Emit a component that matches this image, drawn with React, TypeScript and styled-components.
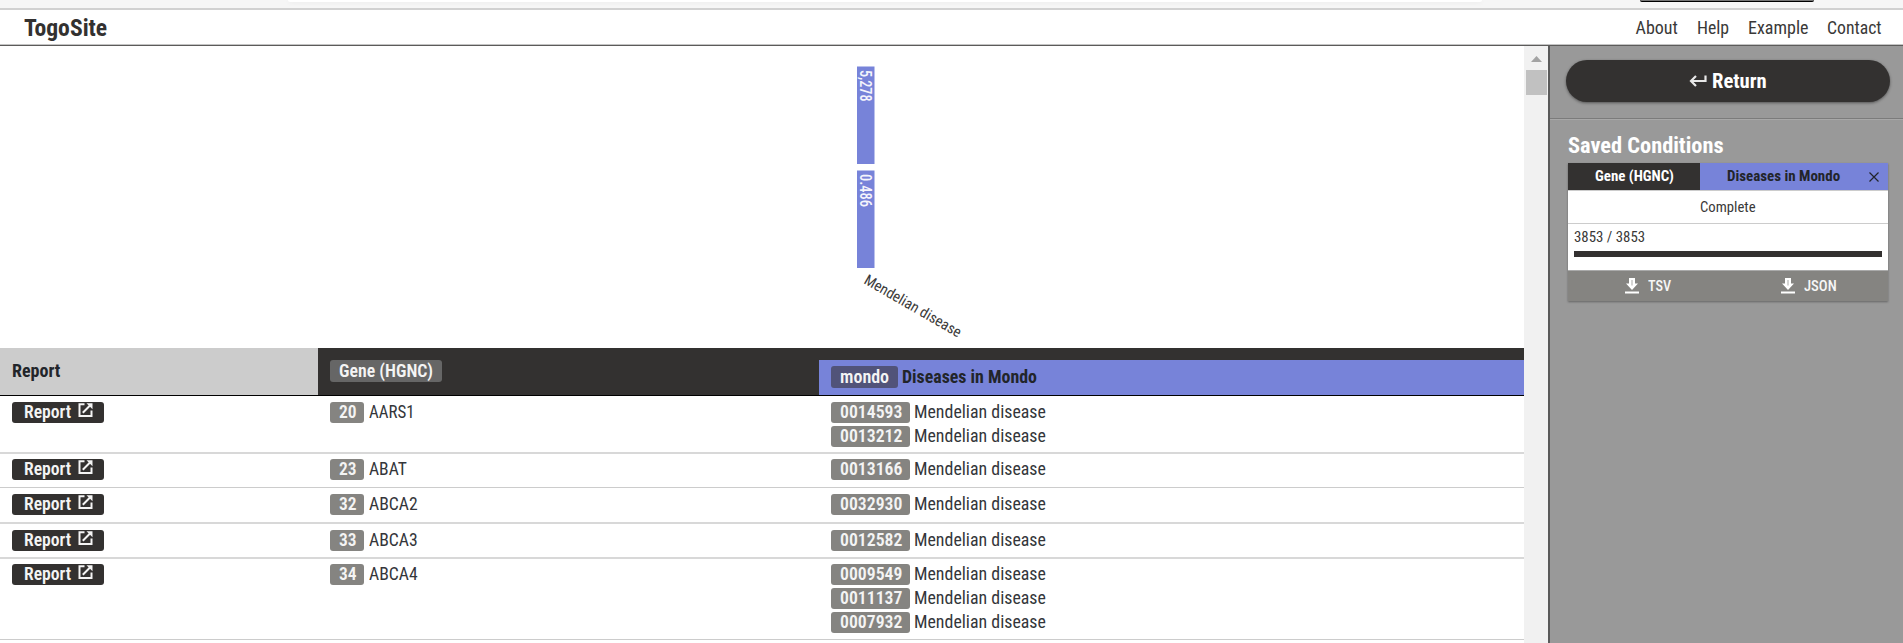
import React, { useLayoutEffect, useRef } from "react";
import styled, { createGlobalStyle } from "styled-components";

const ink = "#333130";
const violet = "#7783d9";

const Global = createGlobalStyle`
  * { box-sizing: border-box; }
  body { margin: 0; overflow: hidden; background: #fff; }
  body, button {
    font-family: "Roboto Condensed", Roboto, "Liberation Sans Narrow", sans-serif;
    font-stretch: 75%;
  }
`;

const FitBox = styled.span<{ $w: number }>`
  display: block;
  flex: none;
  width: ${(p) => p.$w}px;
  white-space: nowrap;
  text-align: left;
`;
const FitInner = styled.span`
  display: inline-block;
  transform-origin: 0 50%;
`;

/* Condenses its text horizontally so that it takes exactly `w` pixels. */
function Fit({ w, children }: { w: number; children: string }) {
  const ref = useRef<HTMLSpanElement>(null);
  useLayoutEffect(() => {
    const el = ref.current;
    if (el) el.style.transform = `scaleX(${w / el.offsetWidth})`;
  }, [w]);
  return (
    <FitBox $w={w}>
      <FitInner ref={ref}>{children}</FitInner>
    </FitBox>
  );
}

const Page = styled.div`
  display: flex;
  flex-direction: column;
  width: 1903px;
  height: 643px;
  overflow: hidden;
  color: #3a3938;
`;

const BrowserStrip = styled.div`
  flex: none;
  display: flex;
  height: 10px;
  padding-left: 288px;
  background: #f6f6f6;
  border-bottom: 2px solid #d1d1d1;
`;
const AddressField = styled.div`
  width: 1194px;
  height: 2px;
  background: #fff;
  border-radius: 0 0 6px 6px;
  box-shadow: 0 1px 4px rgba(0, 0, 0, 0.06);
`;
const ProfileChip = styled.div`
  width: 174px;
  height: 2px;
  margin-left: 158px;
  background: #777;
  border-bottom: 1px solid #000;
  border-radius: 0 0 6px 6px;
`;

const Header = styled.header`
  flex: none;
  display: flex;
  align-items: center;
  justify-content: space-between;
  height: 36px;
  padding: 1px 21px 0 24px;
  border-bottom: 1px solid #5c5b5a;
  box-shadow: inset 0 -1px 0 #c4c4c4;
`;
const Brand = styled.h1`
  margin: 0;
  color: ${ink};
  font-size: 23.5px;
  font-weight: 700;
  line-height: 30px;
`;
const Nav = styled.nav`
  display: flex;
  gap: 19px;
  font-size: 18px;
  line-height: 28px;
`;

const Body = styled.div`
  flex: 1;
  display: flex;
  min-height: 0;
`;
const Main = styled.main`
  width: 1524px;
  overflow: hidden;
`;

const Chart = styled.svg`
  display: block;
  width: 1524px;
  height: 302px;
`;

const columns = "318px 501px 705px";

const TableHead = styled.div`
  display: grid;
  grid-template-columns: ${columns};
  height: 48px;
  border-bottom: 1px solid #000;
  font-size: 18px;
  font-weight: 700;
  line-height: 22px;
  background: ${ink};
`;
const ReportHead = styled.div`
  display: flex;
  align-items: center;
  padding: 0 0 2px 12px;
  background: #ccc;
  color: #22252a;
`;
const GeneHead = styled.div`
  display: flex;
  align-items: center;
  padding: 0 0 2px 11.5px;
`;
const MondoHead = styled.div`
  display: flex;
  align-items: center;
  gap: 4px;
  margin-top: 12px;
  padding: 0 0 2px 12px;
  background: ${violet};
  color: #22252a;
`;

const pillColours = { head: "#666", mondo: "#515379", id: "#858481", report: ink };
const Pill = styled.span<{ $kind: keyof typeof pillColours; $w: number; $left?: number }>`
  display: flex;
  flex: none;
  gap: 7px;
  width: ${(p) => p.$w}px;
  height: ${(p) => (p.$kind === "head" || p.$kind === "mondo" ? 22 : 21)}px;
  padding-left: ${(p) => p.$left ?? 9}px;
  border-radius: 3px;
  background: ${(p) => pillColours[p.$kind]};
  color: #f4f4f4;
  font-weight: 600;
  line-height: ${(p) => (p.$kind === "head" || p.$kind === "mondo" ? 22 : 20)}px;
`;

const Row = styled.div<{ $h: number; $line: number; $top: number }>`
  display: grid;
  grid-template-columns: ${columns};
  height: ${(p) => p.$h}px;
  padding-top: ${(p) => p.$top}px;
  border-bottom: ${(p) => p.$line}px solid ${(p) => (p.$line === 2 ? "#d8d8d8" : "#ccc")};
  font-size: 18px;
  line-height: 20px;
  color: #34363a;
`;
const Cell = styled.div`
  display: flex;
  flex-direction: column;
  gap: 3px;
  padding-left: 11.5px;
`;
const Entry = styled.div`
  display: flex;
  gap: 4.5px;
  height: 21px;
`;

const Scrollbar = styled.div`
  flex: none;
  width: 24px;
  padding: 10px 1px 0 2px;
  background: #f1f1f1;
`;
const ScrollArrow = styled.svg`
  display: block;
  width: 11px;
  height: 6px;
  margin: 0 0 8px 5px;
`;
const ScrollThumb = styled.div`
  height: 25px;
  background: #c1c1c1;
`;

const Side = styled.aside`
  flex: 1;
  border-left: 2px solid #5a5a5a;
  background: #999;
`;
const ReturnArea = styled.div`
  height: 73px;
  padding: 14px 13px 0 16px;
  border-bottom: 1px solid #7b7b7b;
  box-shadow: 0 1px 0 #a8a8a8;
`;
const ReturnButton = styled.button`
  display: flex;
  align-items: center;
  justify-content: center;
  gap: 5px;
  width: 324px;
  height: 42px;
  padding: 0;
  border: 0;
  border-radius: 21px;
  background: ${ink};
  color: #fff;
  font-size: 19.5px;
  font-weight: 700;
  box-shadow: 0 1px 3px rgba(0, 0, 0, 0.45);
`;
const Conditions = styled.section`
  padding: 11px 15px 0 18px;
`;
const SideTitle = styled.h2`
  margin: 0;
  height: 33px;
  color: #fff;
  font-size: 21.5px;
  font-weight: 700;
  line-height: 31px;
`;
const Card = styled.div`
  width: 320px;
  background: #fff;
  font-size: 15.5px;
  box-shadow: 0 1px 2px rgba(0, 0, 0, 0.35);
`;
const Tabs = styled.div`
  display: flex;
  height: 28px;
  border-bottom: 1px solid #ccc;
  font-weight: 700;
  line-height: 27px;
`;
const GeneTab = styled.div`
  width: 132px;
  padding-left: 27px;
  background: ${ink};
  color: #fff;
`;
const MondoTab = styled.div`
  display: flex;
  align-items: center;
  gap: 29px;
  flex: 1;
  padding-left: 27px;
  background: ${violet};
  color: #22252a;
`;
const Status = styled.div`
  display: flex;
  justify-content: center;
  height: 33px;
  border-bottom: 1px solid #ccc;
  line-height: 33px;
`;
const Progress = styled.div`
  height: 46px;
  padding: 2px 6px 0;
  line-height: 23px;
`;
const ProgressBar = styled.div`
  height: 6px;
  margin-top: 2px;
  background: ${ink};
`;
const Downloads = styled.div`
  display: grid;
  grid-template-columns: 57px 155.5px 1fr;
  height: 31px;
  border-top: 1px solid #aaa;
  background: #858481;
  color: #f6f6f6;
  font-weight: 500;
`;
const Download = styled.div`
  display: flex;
  align-items: center;
  gap: 9px;
`;

const OpenIcon = () => (
  <svg width="16" height="16" viewBox="0 0 16 16" fill="none" stroke="#f4f4f4" strokeWidth="2">
    <path d="M6.500 2.200H1.500v11.800H13.500V8.500M4.800 10.700 12.500 3" />
    <path d="M8.500 1.200h6V7.200z" fill="#f4f4f4" stroke="none" />
  </svg>
);
const DownloadIcon = () => (
  <svg width="14" height="16" viewBox="0 0 14 16" fill="#fff">
    <path d="M4 0h6v5.500H13L7 12 1 5.500h3zM0 13.500h14V15.500H0z" />
    <path d="M6.500 2h1v5.500h-1z" fill="#aaa9a7" />
  </svg>
);

const rows = [
  { id: "20", name: "AARS1", w: 46, h: 58, line: 2, top: 6, mondo: ["0014593", "0013212"] },
  { id: "23", name: "ABAT", w: 38, h: 34, line: 1, top: 5.4, mondo: ["0013166"] },
  { id: "32", name: "ABCA2", w: 49, h: 36, line: 2, top: 6, mondo: ["0032930"] },
  { id: "33", name: "ABCA3", w: 49, h: 35, line: 2, top: 6, mondo: ["0012582"] },
  { id: "34", name: "ABCA4", w: 49, h: 81, line: 1, top: 5.4, mondo: ["0009549", "0011137", "0007932"] },
];

export default function App() {
  return (
    <Page>
      <Global />
      <BrowserStrip>
        <AddressField />
        <ProfileChip />
      </BrowserStrip>
      <Header>
        <Brand><Fit w={83.5}>TogoSite</Fit></Brand>
        <Nav>
          <Fit w={42}>About</Fit>
          <Fit w={32.5}>Help</Fit>
          <Fit w={60}>Example</Fit>
          <Fit w={55}>Contact</Fit>
        </Nav>
      </Header>
      <Body>
        <Main>
          <Chart viewBox="0 0 1524 302">
            <rect x="857" y="20.500" width="17.500" height="97.500" fill={violet} />
            <rect x="857" y="124.500" width="17.500" height="97.500" fill={violet} />
            <g fill="#f4f4fc" fontSize="17" fontWeight="500">
              <text transform="translate(860 24) rotate(90)" textLength="31.500" lengthAdjust="spacingAndGlyphs">5,278</text>
              <text transform="translate(860 128) rotate(90)" textLength="33" lengthAdjust="spacingAndGlyphs">0.486</text>
            </g>
            <text transform="translate(863 237) rotate(30)" textLength="109.500" lengthAdjust="spacingAndGlyphs" fontSize="15" fill="#3c3b3a">
              Mendelian disease
            </text>
          </Chart>
          <TableHead>
            <ReportHead><Fit w={48}>Report</Fit></ReportHead>
            <GeneHead><Pill $kind="head" $w={112.5}><Fit w={94}>Gene (HGNC)</Fit></Pill></GeneHead>
            <MondoHead>
              <Pill $kind="mondo" $w={67}><Fit w={49}>mondo</Fit></Pill>
              <Fit w={135}>Diseases in Mondo</Fit>
            </MondoHead>
          </TableHead>
          {rows.map((r) => (
            <Row key={r.id} $h={r.h} $line={r.line} $top={r.top}>
              <Cell>
                <Pill $kind="report" $w={92} $left={12}><Fit w={47}>Report</Fit><OpenIcon /></Pill>
              </Cell>
              <Cell>
                <Entry><Pill $kind="id" $w={34.5}><Fit w={17.5}>{r.id}</Fit></Pill><Fit w={r.w}>{r.name}</Fit></Entry>
              </Cell>
              <Cell>
                {r.mondo.map((m) => (
                  <Entry key={m}><Pill $kind="id" $w={79}><Fit w={62}>{m}</Fit></Pill><Fit w={132}>Mendelian disease</Fit></Entry>
                ))}
              </Cell>
            </Row>
          ))}
        </Main>
        <Scrollbar>
          <ScrollArrow viewBox="0 0 11 6"><path d="M0 6 5.500 0 11 6z" fill="#a3a3a3" /></ScrollArrow>
          <ScrollThumb />
        </Scrollbar>
        <Side>
          <ReturnArea>
            <ReturnButton>
              <svg width="18" height="14" viewBox="0 0 18 14" fill="none" stroke="#e8e8e8" strokeWidth="2.200">
                <path d="M16.500 1.500v5.500H2M7 2 2 7l5 5" />
              </svg>
              <Fit w={55}>Return</Fit>
            </ReturnButton>
          </ReturnArea>
          <Conditions>
            <SideTitle><Fit w={156}>Saved Conditions</Fit></SideTitle>
            <Card>
              <Tabs>
                <GeneTab><Fit w={79}>Gene (HGNC)</Fit></GeneTab>
                <MondoTab>
                  <Fit w={113}>Diseases in Mondo</Fit>
                  <svg width="10" height="10" viewBox="0 0 10 10" stroke="#22252a" strokeWidth="1.200">
                    <path d="M.5.5l9 9M9.500.5l-9 9" />
                  </svg>
                </MondoTab>
              </Tabs>
              <Status><Fit w={56}>Complete</Fit></Status>
              <Progress>
                <Fit w={71}>3853 / 3853</Fit>
                <ProgressBar />
              </Progress>
              <Downloads>
                <span />
                <Download><DownloadIcon /><Fit w={23}>TSV</Fit></Download>
                <Download><DownloadIcon /><Fit w={33}>JSON</Fit></Download>
              </Downloads>
            </Card>
          </Conditions>
        </Side>
      </Body>
    </Page>
  );
}
